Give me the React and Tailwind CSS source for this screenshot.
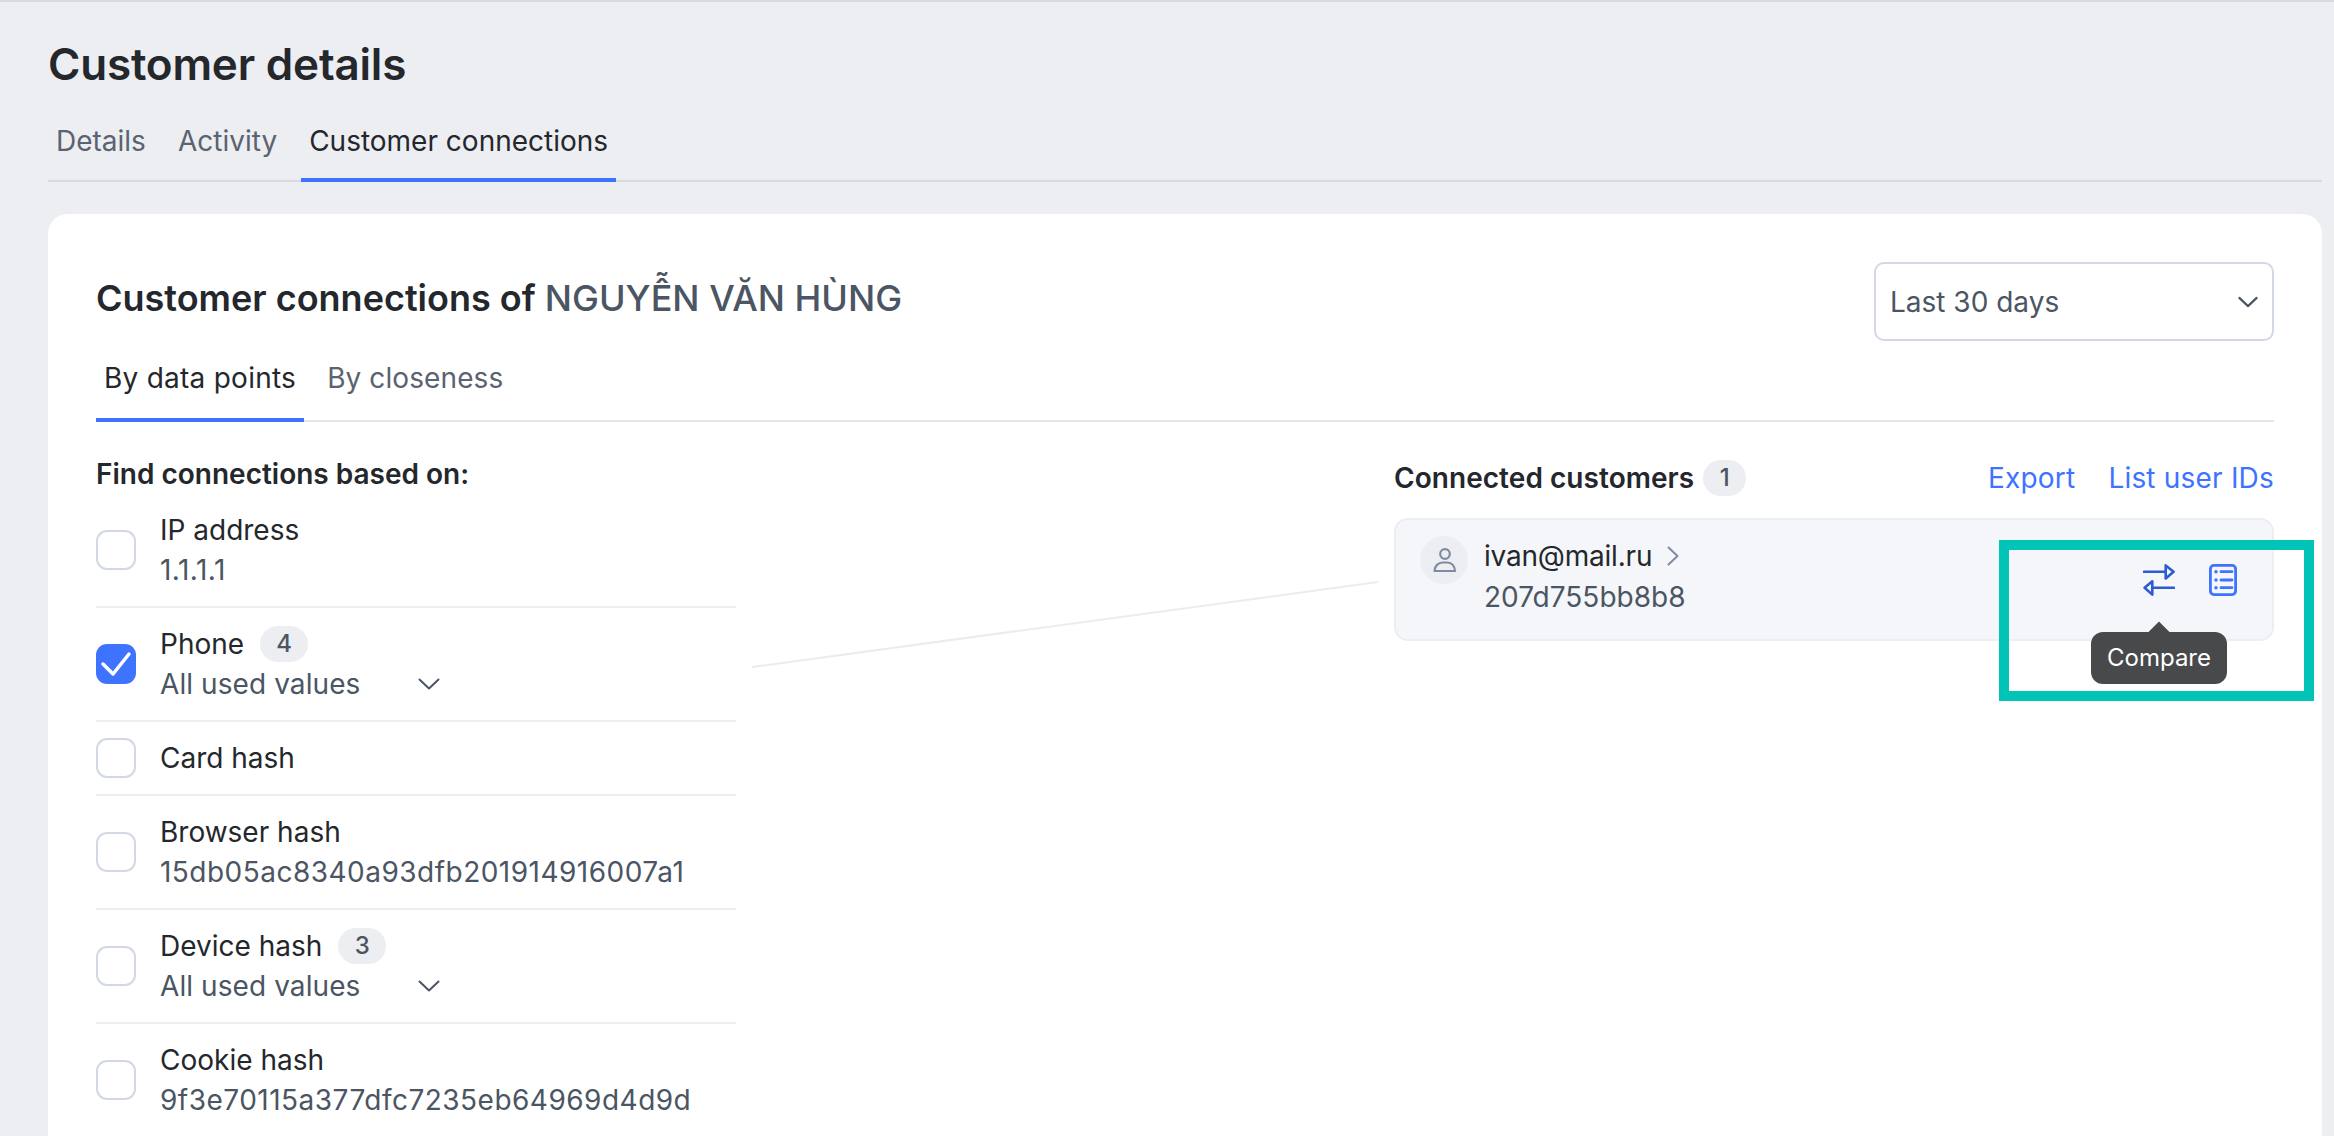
import React from "react";

const Chevron = ({ className = "", strokeWidth = 2 }) => (
  <svg viewBox="0 0 22 12" fill="none" stroke="#4b5563" strokeWidth={strokeWidth} strokeLinecap="round" strokeLinejoin="round" className={className}>
    <path d="M1.5 1.5 11 10.5 20.5 1.5" />
  </svg>
);

const Badge = ({ children, className = "w-[48px]" }) => (
  <span className={`flex h-9 items-center justify-center rounded-full bg-[#eceef2] text-[24px] font-medium text-[#4b5563] ${className}`}>{children}</span>
);

const rows = [
  { label: "IP address", value: "1.1.1.1", spaced: true },
  { label: "Phone", badge: "4", value: "All used values", dropdown: true, checked: true },
  { label: "Card hash" },
  { label: "Browser hash", value: "15db05ac8340a93dfb201914916007a1", spaced: true },
  { label: "Device hash", badge: "3", value: "All used values", dropdown: true },
  { label: "Cookie hash", value: "9f3e70115a377dfc7235eb64969d4d9d", spaced: true },
];

const Row = ({ row }) => (
  <div className="flex items-center border-b-2 border-[#eceef2] py-4 last:border-b-0">
    {row.checked ? (
      <span className="flex h-10 w-10 shrink-0 items-center justify-center rounded-[11px] bg-[#3d73ff]">
        <svg viewBox="0 0 40 40" className="h-10 w-10" fill="none" stroke="#fff" strokeWidth="3.5" strokeLinecap="round" strokeLinejoin="round">
          <path d="M7 20 17 30 33 10" />
        </svg>
      </span>
    ) : (
      <span className="h-10 w-10 shrink-0 rounded-[11px] border-2 border-[#d3d8e5] bg-white" />
    )}
    <div className="ml-6 min-w-0">
      <div className="flex h-10 items-center gap-4 text-[#24272c]">
        <span>{row.label}</span>
        {row.badge && <Badge>{row.badge}</Badge>}
      </div>
      {row.value && (
        <div className={row.spaced ? "flex h-10 items-center tracking-[0.48px] text-[#4b5563]" : "flex h-10 items-center tracking-[0.08px] text-[#4b5563]"}>
          <span>{row.value}</span>
          {row.dropdown && <Chevron className="ml-[58px] h-3 w-[22px]" />}
        </div>
      )}
    </div>
  </div>
);

const SwapIcon = () => (
  <svg viewBox="0 0 32 32" className="h-8 w-8" fill="none" stroke="#2d5bd0" strokeWidth="2.6" strokeLinecap="round" strokeLinejoin="round">
    <path d="M1 7.7H22.7" />
    <path d="M22.7 1.4 30.6 7.7 22.7 14.4Z" />
    <path d="M31 23.7H9.3" />
    <path d="M9.3 17.2 1.6 23.7 9.3 30.6Z" />
  </svg>
);

const ListIcon = () => (
  <svg viewBox="0 0 28 32" className="h-8 w-7" fill="none" stroke="#3d73ff" strokeWidth="2.8" strokeLinecap="round">
    <rect x="1.4" y="1.4" width="25.2" height="29.2" rx="3.5" />
    <path d="M12 7.7H23M12 16H23M12 23.7H23" />
    <circle cx="7" cy="7.7" r="1.7" fill="#3d73ff" stroke="none" />
    <circle cx="7" cy="16" r="1.7" fill="#3d73ff" stroke="none" />
    <circle cx="7" cy="23.7" r="1.7" fill="#3d73ff" stroke="none" />
  </svg>
);

const PersonIcon = () => (
  <svg viewBox="0 0 48 48" className="h-12 w-12" fill="none" stroke="#7f8aa3" strokeWidth="2.2">
    <circle cx="25" cy="18" r="4.8" />
    <path d="M14.5 35c0-5 4-8.500 8-8.500h5c4 0 7.500 3.500 7.500 8.500Z" strokeLinejoin="round" />
  </svg>
);

export default function App() {
  return (
    <div className="relative h-[1136px] overflow-hidden border-t-2 border-[#d8dadf] bg-[#eceef2] pl-12 pr-3 text-[28px] leading-10 font-['Inter',sans-serif]">
      <h1 className="pt-[38px] text-[44px] leading-[48px] font-semibold tracking-[-0.2px] text-[#24272c]">Customer details</h1>

      <div className="flex h-[94px] gap-4 border-b-2 border-[#d8dadf]">
        <div className="h-[92px] px-2 pt-[33px] text-[#5b6270]">Details</div>
        <div className="h-[92px] px-2 pt-[33px] text-[#5b6270]">Activity</div>
        <div className="h-[94px] border-b-4 border-[#3d73ff] px-2 pt-[33px] text-[#24272c]">Customer connections</div>
      </div>

      <div className="mt-8 h-[1000px] rounded-t-[20px] bg-white px-12 pt-12">
        <div className="flex h-[79px] items-center justify-between">
          <h2 className="-mt-2 text-[36px] leading-[48px] font-semibold text-[#24272c]">
            Customer connections of <span className="font-medium text-[#4b5563]">NGUYỄN VĂN HÙNG</span>
          </h2>
          <div className="flex h-[79px] w-[400px] items-center justify-between rounded-[10px] border-2 border-[#d3d8e5] pr-[14px] pl-[14px] text-[#4b5563]">
            <span>Last 30 days</span>
            <Chevron className="h-3 w-5" strokeWidth={2.4} />
          </div>
        </div>

        <div className="flex h-[81px] gap-[15px] border-b-2 border-[#e6e7ea]">
          <div className="h-[81px] border-b-4 border-[#3d73ff] px-2 pt-[17px] tracking-[0.25px] text-[#24272c]">By data points</div>
          <div className="h-[79px] px-2 pt-[17px] tracking-[0.1px] text-[#5b6270]">By closeness</div>
        </div>

        <div className="flex gap-[658px]">
          <div className="w-[640px] shrink-0 pt-8">
            <div className="font-semibold text-[#24272c]">Find connections based on:</div>
            {rows.map((row) => (
              <Row key={row.label} row={row} />
            ))}
          </div>

          <div className="min-w-0 flex-1 pt-9">
            <div className="flex h-10 items-center justify-between">
              <div className="flex items-center gap-[9px]">
                <span className="font-semibold tracking-[0.05px] text-[#24272c]">Connected customers</span>
                <Badge className="w-[43px]">1</Badge>
              </div>
              <div className="flex gap-[33px] tracking-[0.2px] text-[#3d73ff]">
                <span>Export</span>
                <span>List user IDs</span>
              </div>
            </div>

            <div className="mt-5 flex h-[123px] rounded-[14px] border-2 border-[#eceef2] bg-[#f5f6f9] pt-4 pr-[35px] pl-6">
              <div className="flex h-12 w-12 shrink-0 items-center justify-center rounded-full bg-[#eceef2]">
                <PersonIcon />
              </div>
              <div className="ml-4">
                <div className="flex h-10 items-center tracking-[-0.2px] text-[#24272c]">
                  ivan@mail.ru
                  <svg viewBox="0 0 12 20" className="ml-[15px] h-5 w-3" fill="none" stroke="#7f8aa3" strokeWidth="2" strokeLinecap="round" strokeLinejoin="round">
                    <path d="M1.500 1.500 10.500 10 1.500 18.500" />
                  </svg>
                </div>
                <div className="mt-px text-[#4b5563]">207d755bb8b8</div>
              </div>
              <div className="mt-7 ml-auto flex h-8 gap-[34px]">
                <div className="relative">
                  <SwapIcon />
                  <div className="absolute top-[68px] left-1/2 flex h-[52px] -translate-x-1/2 items-center rounded-xl bg-[#48494b] px-4 text-[24px] text-white">
                    <span className="absolute -top-[7px] left-1/2 h-[17px] w-[17px] -translate-x-1/2 rotate-45 bg-[#48494b]" />
                    <span className="relative">Compare</span>
                  </div>
                </div>
                <ListIcon />
              </div>
            </div>
          </div>
        </div>
      </div>

      <svg className="pointer-events-none absolute top-0 left-0 h-[1136px] w-[2334px]" fill="none">
        <path d="M752 665 1378 580" stroke="#ececec" strokeWidth="2" />
      </svg>
      <div className="pointer-events-none absolute top-[538px] left-[1999px] h-[161px] w-[315px] border-[10px] border-[#02c4b6]" />
    </div>
  );
}
